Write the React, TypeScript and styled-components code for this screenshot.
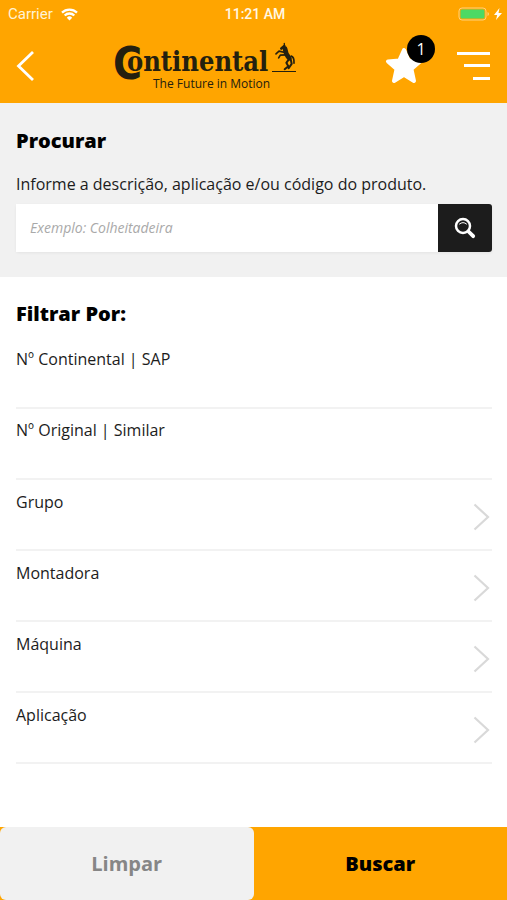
import React from "react";
import styled, { createGlobalStyle } from "styled-components";

const GlobalStyle = createGlobalStyle`
  * { box-sizing: border-box; }
  body { margin: 0; background: #fff; }
  button, input { font: inherit; color: inherit; border: 0; border-radius: 0; margin: 0; padding: 0; background: none; }
  button { cursor: pointer; }
  svg { display: block; }
  h1, h2, p { margin: 0; }
`;

const orange = "#ffa500";

const Screen = styled.div`
  display: flex;
  flex-direction: column;
  min-height: 100vh;
  font-family: "Open Sans", "Noto Sans", sans-serif;
  font-size: 16px;
  line-height: 24px;
  color: #1c1c1c;
`;

const Header = styled.header`
  background: ${orange};
`;

const StatusBar = styled.div`
  display: grid;
  grid-template-columns: 1fr auto 1fr;
  align-items: center;
  height: 28px;
  padding: 0 5px 0 8px;
  font-family: Roboto, sans-serif;
  font-size: 15px;
  line-height: 20px;
  color: #fff3d6;
`;

const StatusGroup = styled.div<{ $end?: boolean }>`
  display: flex;
  align-items: center;
  justify-content: ${(p) => (p.$end ? "flex-end" : "flex-start")};
  gap: ${(p) => (p.$end ? 4 : 8)}px;
`;

const Clock = styled.time`
  font-size: 14px;
  font-weight: 500;
  color: #fff8e6;
`;

const NavBar = styled.div`
  display: flex;
  align-items: center;
  justify-content: space-between;
  height: 75px;
  padding: 0 16px;
`;

const NavActions = styled.div`
  display: flex;
  align-items: center;
  gap: 22px;
  padding-left: 8px;
`;

const IconButton = styled.button`
  position: relative;
  display: flex;
`;

const Badge = styled.span`
  position: absolute;
  top: -12px;
  right: 0;
  width: 28px;
  height: 28px;
  border-radius: 50%;
  background: #000;
  color: #fff;
  font-size: 16px;
  line-height: 29px;
  text-align: center;
`;

const SearchSection = styled.section`
  padding: 25px 15px 25px 16px;
  background: #f1f1f1;
`;

const Title = styled.h2`
  font-size: 20px;
  line-height: 26px;
  font-weight: 800;
  color: #000;
`;

const Hint = styled.label`
  display: block;
  margin: 18px 0 8px;
`;

const SearchBox = styled.form`
  display: flex;
  height: 48px;
  border-radius: 3px;
  box-shadow: 0 1px 3px rgba(0, 0, 0, 0.06);
`;

const SearchInput = styled.input`
  flex: 1;
  min-width: 0;
  padding: 0 14px;
  background: #fff;
  font-size: 14px;
  &::placeholder {
    color: #a9a9a9;
    font-style: italic;
    opacity: 1;
  }
`;

const SearchButton = styled.button`
  display: flex;
  align-items: center;
  justify-content: center;
  width: 54px;
  border-radius: 0 3px 3px 0;
  background: #1c1c1c;
`;

const Filters = styled.section`
  flex: 1;
  padding: 24px 15px 0 16px;
`;

const FilterList = styled.div`
  margin-top: 11px;
`;

const Field = styled.div`
  display: flex;
  flex-direction: column;
  height: 71px;
  padding-top: 10px;
  border-bottom: 2px solid #f2f2f2;
  line-height: 22px;
`;

const FieldInput = styled.input`
  flex: 1;
  width: 100%;
`;

const FilterButton = styled.button`
  display: flex;
  align-items: flex-start;
  justify-content: space-between;
  width: 100%;
  height: 71px;
  padding: 11px 2px 0 0;
  border-bottom: 2px solid #f2f2f2;
  line-height: 22px;
  text-align: left;
`;

const Arrow = styled.svg`
  margin-top: 12px;
`;

const Footer = styled.footer`
  display: grid;
  grid-template-columns: 1fr 1fr;
  height: 73px;
  background: ${orange};
`;

const FooterButton = styled.button<{ $muted?: boolean }>`
  border-radius: 6px;
  background: ${(p) => (p.$muted ? "#f1f1f1" : orange)};
  color: ${(p) => (p.$muted ? "#868686" : "#000")};
  font-size: 20px;
  font-weight: ${(p) => (p.$muted ? 700 : 800)};
`;

function Logo() {
  return (
    <svg width="188" height="60" viewBox="-4 -4 188 60" fill="#24200f" role="img" aria-label="Continental, The Future in Motion">
      <text x="-4" y="39" fontFamily="DejaVu Sans Condensed, DejaVu Sans, sans-serif" fontWeight="700" fontSize="44">C</text>
      <text x="10" y="31" fontFamily="DejaVu Serif Condensed, DejaVu Serif, serif" fontWeight="700" fontSize="27" stroke={orange} strokeWidth="3" paintOrder="stroke">ontinental</text>
      <path d="M155 31h24v1h-24z" />
      <g transform="translate(156 2.500) scale(.3333)" fill="none" stroke="#24200f" strokeLinecap="round" strokeLinejoin="round">
        <path d="M36 18q2 18 13 29" strokeWidth="14" />
        <path d="M34 11 25 18" strokeWidth="8" />
        <path d="M34 9V3" strokeWidth="4" />
        <path d="M36 30 18 26 9 34M38 37 22 38 17 46" strokeWidth="5" />
        <path d="M48 50 40 61 46 71 35 80M53 50 56 64 47 77" strokeWidth="6" />
        <path d="M55 41q9 3 8 21" strokeWidth="5" />
      </g>
      <text x="36" y="48" fontFamily="Open Sans, sans-serif" fontSize="12">The Future in Motion</text>
    </svg>
  );
}

const selectors = ["Grupo", "Montadora", "Máquina", "Aplicação"];

export default function App() {
  return (
    <Screen>
      <GlobalStyle />
      <Header>
        <StatusBar>
          <StatusGroup>
            <span>Carrier</span>
            <svg width="17" height="13" viewBox="0 0 17 13" fill="none" stroke="#fff" strokeWidth="2.300">
              <path d="M1 4.600a10.700 10.700 0 0 1 15 0M3.700 7.500a6.800 6.800 0 0 1 9.600 0" />
              <path d="M8.500 12.500 5.800 9.700a3.800 3.800 0 0 1 5.400 0z" fill="#fff" stroke="none" />
            </svg>
          </StatusGroup>
          <Clock>11:21 AM</Clock>
          <StatusGroup $end>
            <svg width="32" height="14" viewBox="0 0 32 14">
              <rect x="1" y="1" width="27" height="12" rx="3" fill="none" stroke="#ffd27a" />
              <rect x="2.500" y="2.500" width="24" height="9" rx="1.500" fill="#4cd964" />
              <path d="M29.500 5v4q1.500-.5 1.500-2t-1.500-2z" fill="#ffd27a" />
            </svg>
            <svg width="8" height="12" viewBox="0 0 8 12" fill="#fff">
              <path d="M5.500 0 0 7h3.200L2 12l6-7H4.500z" />
            </svg>
          </StatusGroup>
        </StatusBar>
        <NavBar>
          <IconButton aria-label="Voltar">
            <svg width="20" height="32" viewBox="0 0 20 32" fill="none" stroke="#fff" strokeWidth="2.800">
              <path d="M17 2 2.500 16 17 30" />
            </svg>
          </IconButton>
          <Logo />
          <NavActions>
            <IconButton aria-label="Favoritos">
              <svg width="50" height="38" viewBox="0 0 50 38" fill="#fff" stroke="#fff" strokeWidth="4" strokeLinejoin="round">
                <path d="m19 3 4.600 10.400 11.400 1-8.600 7.500 2.600 12.100-10-6.300L9 34l2.600-12.100L3 14.400l11.400-1z" />
              </svg>
              <Badge>1</Badge>
            </IconButton>
            <IconButton aria-label="Menu">
              <svg width="34" height="30" viewBox="0 0 34 30" fill="#fff">
                <path d="M0 1h33v3H0zM7 13h26v3H7zM16 26h17v3H16z" />
              </svg>
            </IconButton>
          </NavActions>
        </NavBar>
      </Header>

      <SearchSection>
        <Title>Procurar</Title>
        <Hint htmlFor="search">Informe a descrição, aplicação e/ou código do produto.</Hint>
        <SearchBox onSubmit={(e) => e.preventDefault()}>
          <SearchInput id="search" placeholder="Exemplo: Colheitadeira" />
          <SearchButton type="submit" aria-label="Procurar">
            <svg width="22" height="22" viewBox="0 0 22 22" fill="none" stroke="#fff" strokeLinecap="round">
              <circle cx="9" cy="9" r="7" strokeWidth="2.500" />
              <path d="m14.500 14.500 4.700 4.700" strokeWidth="3.800" />
              <path d="M5.500 7q3.500-3 7 0" strokeWidth="1" />
            </svg>
          </SearchButton>
        </SearchBox>
      </SearchSection>

      <Filters>
        <Title>Filtrar Por:</Title>
        <FilterList>
          <Field>
            <label htmlFor="sap">Nº Continental | SAP</label>
            <FieldInput id="sap" />
          </Field>
          <Field>
            <label htmlFor="original">Nº Original | Similar</label>
            <FieldInput id="original" />
          </Field>
          {selectors.map((name) => (
            <FilterButton key={name}>
              {name}
              <Arrow width="17" height="28" viewBox="0 0 17 28" fill="none" stroke="#d9d9d9" strokeWidth="2.200">
                <path d="M1.500 1.500 15 14 1.500 26.500" />
              </Arrow>
            </FilterButton>
          ))}
        </FilterList>
      </Filters>

      <Footer>
        <FooterButton $muted>Limpar</FooterButton>
        <FooterButton>Buscar</FooterButton>
      </Footer>
    </Screen>
  );
}
